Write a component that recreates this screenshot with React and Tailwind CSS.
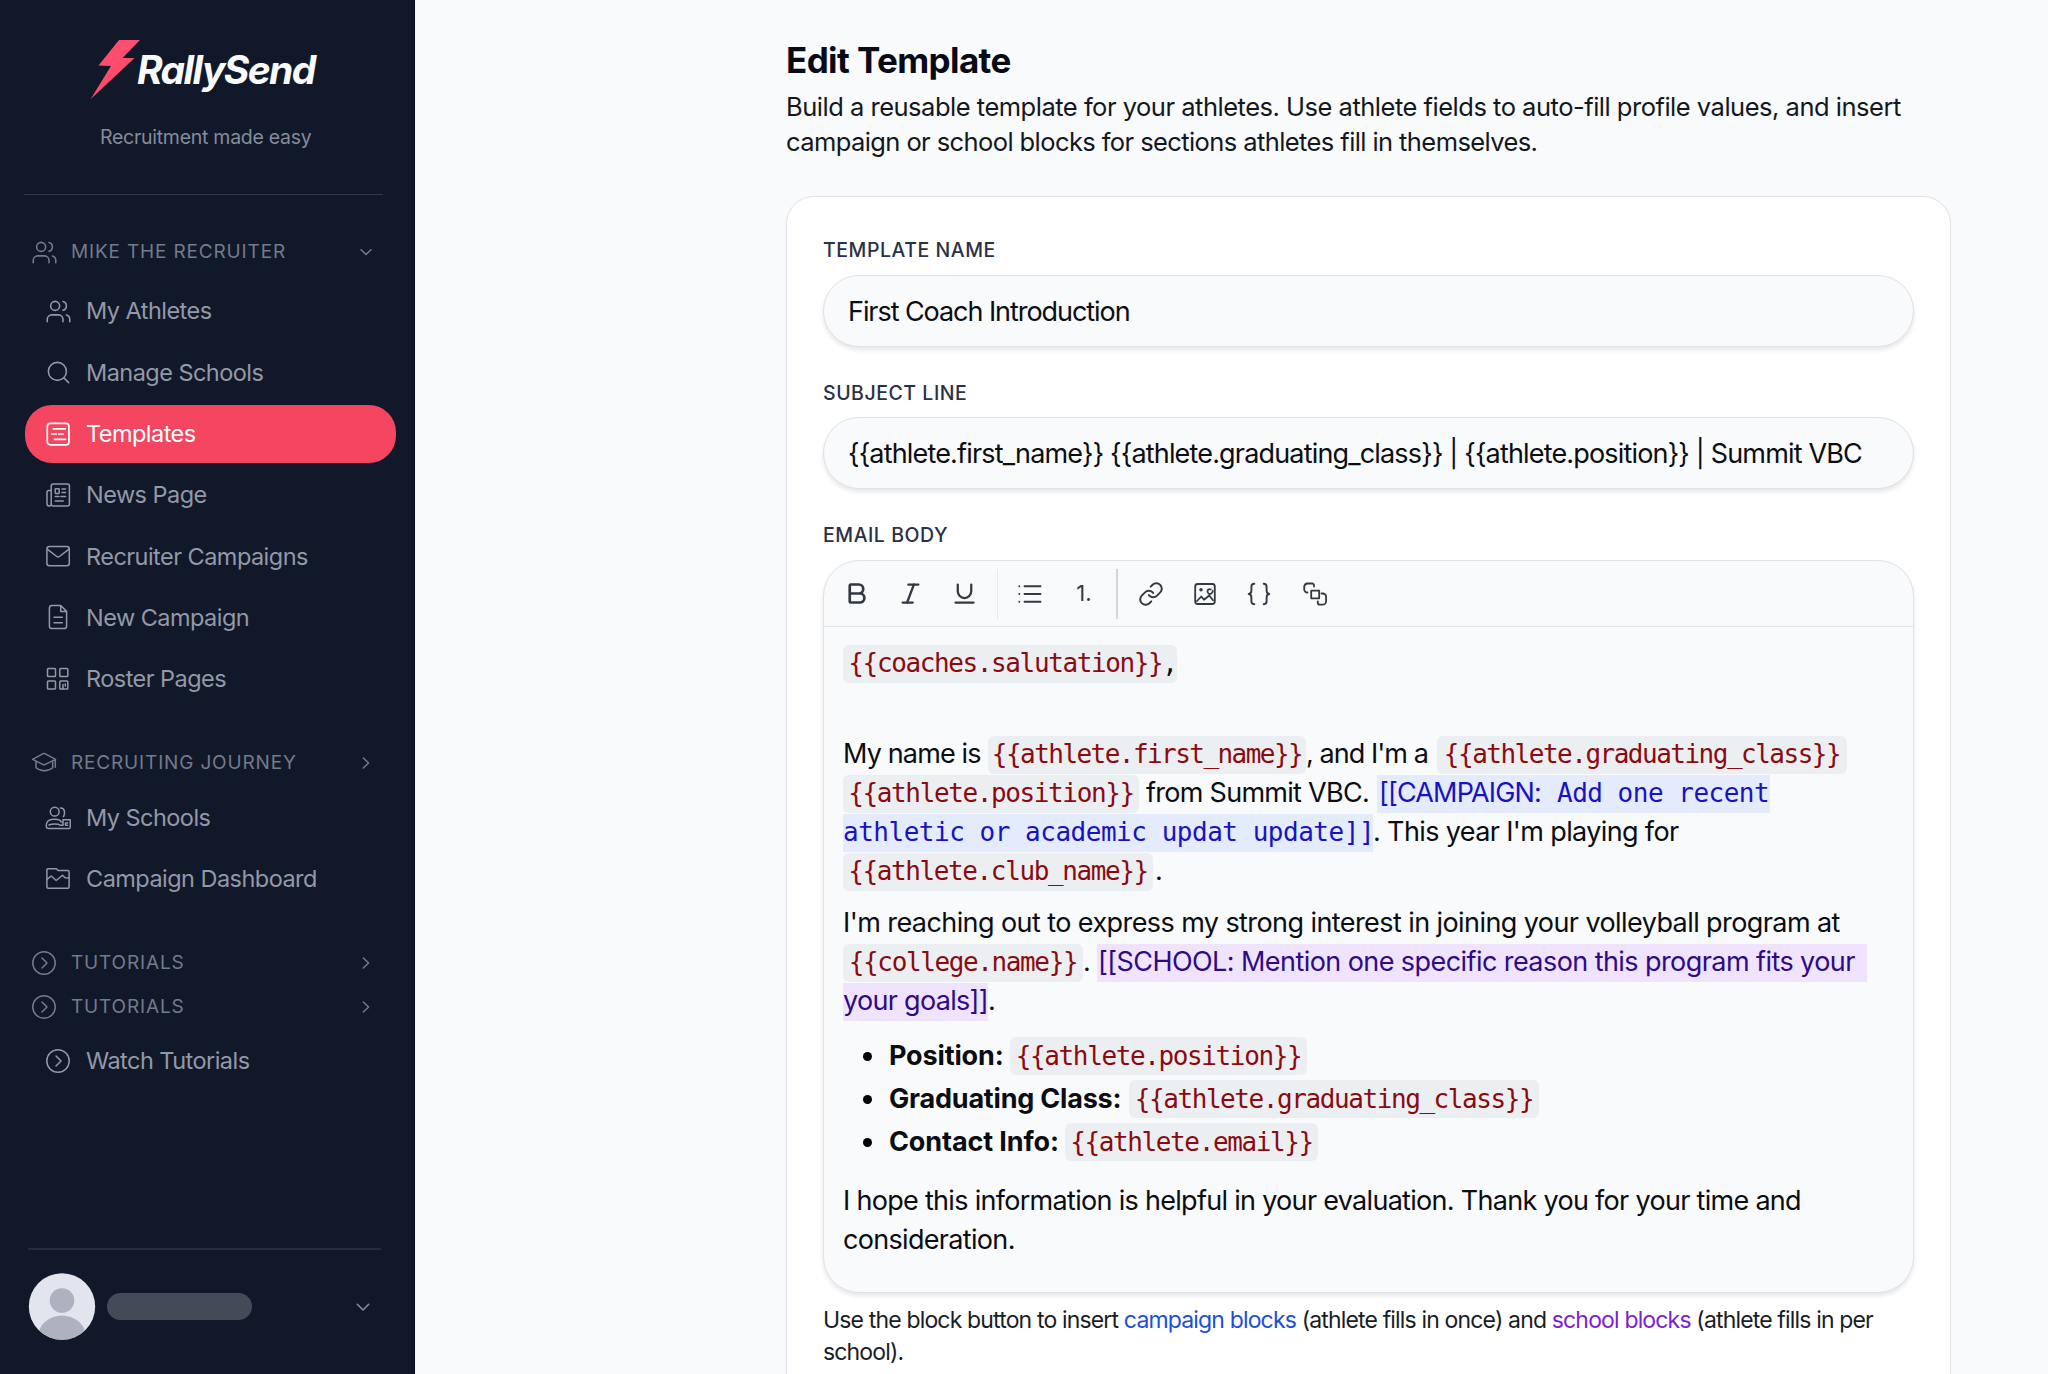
import React from "react";
import { Bold, Italic, Link, Search, Underline, Users } from "lucide-react";
import clsx from "clsx";

const Icon = ({ children, size = 26, sw = 1.5, className }) => (
  <svg
    width={size}
    height={size}
    viewBox="0 0 26 26"
    fill="none"
    stroke="currentColor"
    strokeWidth={sw}
    strokeLinecap="round"
    strokeLinejoin="round"
    className={clsx("shrink-0", className)}
  >
    {children}
  </svg>
);

const UsersIcon = () => <Users size={27} strokeWidth={1.4} className="-mr-px shrink-0" />;

const SearchIcon = () => <Search size={27} strokeWidth={1.4} className="-mr-px shrink-0" />;

const TemplateIcon = () => (
  <Icon sw={1.7}>
    <rect x="2.3" y="2.3" width="21.6" height="21.6" rx="3" />
    <path d="M8.3 7.8h12M6.8 13h4.4M13.6 13h4.7M9.5 18.3h11" />
  </Icon>
);

const NewsIcon = () => (
  <Icon>
    <rect x="6.2" y="2" width="18.2" height="22" rx="2" />
    <path d="M6.2 8.5H4A2 2 0 0 0 2 10.5v11.3a2.2 2.2 0 0 0 4.4 0" />
    <rect x="10.2" y="6.8" width="4" height="4.6" rx=".6" />
    <path d="M17 7h3.5M17 10.5h3.5M10.3 14.5H14M16 14.5h4.5M10.3 19h8" />
  </Icon>
);

const MailIcon = () => (
  <Icon>
    <rect x="1.9" y="3.4" width="22.4" height="19.4" rx="2.5" />
    <path d="m2.5 6.3 9.3 7.2a2.1 2.1 0 0 0 2.6 0l9.3-7.2" />
  </Icon>
);

const FileIcon = () => (
  <Icon>
    <path d="M15.7 1.5H7A2.6 2.6 0 0 0 4.4 4.1v17.8A2.6 2.6 0 0 0 7 24.5h12a2.6 2.6 0 0 0 2.6-2.6V7.4zv5.9h5.9" />
    <path d="M9 13.3h8.3M9 18.7h8.3" />
  </Icon>
);

const GridIcon = () => (
  <Icon>
    <rect x="2.5" y="2.5" width="8" height="8" rx=".8" />
    <rect x="14.8" y="2.5" width="8" height="8" rx=".8" />
    <rect x="2.5" y="15" width="8" height="8" rx=".8" />
    <rect x="14.8" y="15" width="8" height="8" rx=".8" />
    <path d="M18 23v-4.5M20.3 18v2" />
  </Icon>
);

const CapIcon = () => (
  <Icon>
    <path d="M1.6 9.3 12.2 3.7a1.8 1.8 0 0 1 1.7 0l10.6 5.6-10.6 5.3a1.8 1.8 0 0 1-1.7 0zM24.3 9.7v7.5" />
    <path d="M5 11.5v6.2c4.5 3.9 12.2 3.9 16.7 0v-6" />
  </Icon>
);

const SchoolsIcon = () => (
  <Icon>
    <circle cx="9.7" cy="6.7" r="4.4" />
    <path d="M15.4 3c4.5-.2 5 5 3.1 8.6M3.5 23.5c-3 0-2.5-4-1.5-6 2-4 12.5-4.3 14.3-.4M4 20c3-1.5 9-1.5 11 0M3.5 23.5h20.4c1 0 1.3-.5 1.3-1.3v-7.4H18v5.4h-3M22.5 18h-2v2.2h2" />
  </Icon>
);

const DashboardIcon = () => (
  <Icon>
    <path d="M1.9 3.9A1.2 1.2 0 0 1 3.1 2.7h8.2l1.8 1.7h9.8A1.2 1.2 0 0 1 24.1 5.6v15.5a1.2 1.2 0 0 1-1.2 1.2H3.1a1.2 1.2 0 0 1-1.2-1.2z" />
    <path d="m2.5 13 3.7-3 5 4.5 6.3-5.3 2.6 2.5 3.6.3" />
  </Icon>
);

const CircleArrowIcon = () => (
  <Icon>
    <circle cx="13" cy="13" r="11.2" />
    <path d="m11 8 5 5-5 5" />
  </Icon>
);

const ChevronDownIcon = ({ wide }) => (
  <Icon className={wide && "text-[#8a90a0]"}>
    <path d={wide ? "m7.3 10.3 5.7 5.7 5.7-5.7" : "m8 10.8 5 4.7 5-4.7"} />
  </Icon>
);

const ChevronRightIcon = () => (
  <Icon>
    <path d="m10.3 8 5.3 5-5.3 5" />
  </Icon>
);

const BulletsIcon = () => (
  <Icon sw={1.9}>
    <path d="M7.5 5.2h16M7.5 13h16M7.5 20.8h16M2.3 5.2h.01M2.3 13h.01M2.3 20.8h.01" />
  </Icon>
);

const ImageIcon = () => (
  <Icon sw={1.8}>
    <rect x="3.2" y="3" width="19.6" height="20" rx="2.5" />
    <circle cx="9" cy="8.8" r=".9" />
    <path d="m5 20 4.3-4.5 2.7 3.3 5.3-4.3 3.7 4.8M18.7 8.5c-3-1.5-4.2 2.5-2.2 4 2 1.2 4-.3 4.3-2.5" />
  </Icon>
);

const BracesIcon = () => (
  <Icon sw={1.9}>
    <path d="M8.3 2.8c-2.3 0-2.9 1-2.9 2.9v3.5c0 2.2-.6 3.8-2.7 3.8 2.1 0 2.7 1.6 2.7 3.8v3.5c0 1.9.6 2.9 2.9 2.9M17.7 2.8c2.3 0 2.9 1 2.9 2.9v3.5c0 2.2.6 3.8 2.7 3.8-2.1 0-2.7 1.6-2.7 3.8v3.5c0 1.9-.6 2.9-2.9 2.9" />
  </Icon>
);

const BlockIcon = () => (
  <Icon sw={1.8}>
    <path d="M12 5.5V4.3a1.8 1.8 0 0 0-1.8-1.8H5.5a3.5 3.5 0 0 0-3.3 3.3v2.4a3.3 3.3 0 0 0 3.3 3.3" />
    <rect x="9.2" y="9.7" width="8" height="7.6" />
    <path d="M19.5 12.5h1.3a3.3 3.3 0 0 1 3.3 3.3v4.4a3.5 3.5 0 0 1-3.5 3.5h-2.8a2 2 0 0 1-2-2v-1.3" />
  </Icon>
);

const recruiterItems = [
  { label: "My Athletes", icon: UsersIcon },
  { label: "Manage Schools", icon: SearchIcon },
  { label: "Templates", icon: TemplateIcon, active: true },
  { label: "News Page", icon: NewsIcon },
  { label: "Recruiter Campaigns", icon: MailIcon },
  { label: "New Campaign", icon: FileIcon },
  { label: "Roster Pages", icon: GridIcon },
];

const journeyItems = [
  { label: "My Schools", icon: SchoolsIcon },
  { label: "Campaign Dashboard", icon: DashboardIcon },
];

const SectionHeader = ({ icon: I, label, open, className }) => (
  <div
    className={clsx(
      "flex h-10 items-center pl-[31px] pr-[35px] text-[#737b8c]",
      className
    )}
  >
    <I />
    <span className="ml-3.5 flex-1 whitespace-nowrap text-[19px] tracking-[0.84px]">
      {label}
    </span>
    {open ? <ChevronDownIcon /> : <ChevronRightIcon />}
  </div>
);

const NavItem = ({ icon: I, label, active }) => (
  <div
    className={clsx(
      "ml-[25px] flex h-[58px] w-[371px] items-center gap-[15px] rounded-[27px] pl-5",
      active ? "bg-[#f44561] text-white" : "text-[#9299a8]"
    )}
  >
    <I />
    <span className="whitespace-nowrap text-[23.5px] tracking-[-0.54px]">{label}</span>
  </div>
);

const Sidebar = () => (
  <aside className="flex h-full w-[415px] shrink-0 flex-col border-r border-[#0a0f1d] bg-[#111829]">
    <div className="mt-10 flex h-[60px] items-center pl-[90px]">
      <svg width="50" height="60" viewBox="0 0 50 60" className="shrink-0">
        <defs>
          <linearGradient id="bolt" x1="0" y1="0" x2="0" y2="1">
            <stop offset="0" stopColor="#ff4f70" />
            <stop offset="1" stopColor="#fb4a68" />
          </linearGradient>
        </defs>
        <path d="M29 0h21L32.5 18h12L.5 59.3 21 26 8.5 25.5z" fill="url(#bolt)" />
      </svg>
      <span className="-ml-[3px] pb-0.5 text-[39px] font-bold italic leading-none tracking-[-1.6px] text-[#f8fafc]">
        RallySend
      </span>
    </div>
    <p className="mt-[25px] pl-[100px] text-[19.5px] leading-6 tracking-[-0.27px] text-[#858c9c]">
      Recruitment made easy
    </p>
    <div className="ml-6 mt-[45px] w-[359px] border-t border-[#323848]" />

    <SectionHeader icon={UsersIcon} label="MIKE THE RECRUITER" open className="mt-[37px]" />
    <nav className="mt-2.5 flex flex-col gap-[3.3px]">
      {recruiterItems.map((item) => (
        <NavItem key={item.label} {...item} />
      ))}
    </nav>

    <SectionHeader icon={CapIcon} label="RECRUITING JOURNEY" className="mt-[35px]" />
    <nav className="mt-1.5 flex flex-col gap-[3.3px]">
      {journeyItems.map((item) => (
        <NavItem key={item.label} {...item} />
      ))}
    </nav>

    <SectionHeader icon={CircleArrowIcon} label="TUTORIALS" className="mt-[35px]" />
    <SectionHeader icon={CircleArrowIcon} label="TUTORIALS" className="mt-1" />
    <nav className="mt-[5px]">
      <NavItem icon={CircleArrowIcon} label="Watch Tutorials" />
    </nav>

    {/* Account */}
    <div className="mb-[34px] ml-7 mt-auto flex w-[353px] items-center border-t-2 border-[#272d3d] pt-[23px]">
      <svg width="68" height="67" viewBox="0 0 68 67" className="shrink-0">
        <defs>
          <clipPath id="avatar">
            <circle cx="34" cy="33.5" r="33.2" />
          </clipPath>
        </defs>
        <g clipPath="url(#avatar)">
          <rect width="68" height="67" fill="#e2e5ee" />
          <circle cx="34" cy="27.5" r="12.3" fill="#adb2be" />
          <ellipse cx="34" cy="64" rx="24" ry="21.5" fill="#adb2be" />
        </g>
      </svg>
      <div className="ml-[11px] h-[27px] w-[145px] rounded-full bg-[#454a59]" />
      <div className="ml-auto mr-[5px]">
        <ChevronDownIcon wide />
      </div>
    </div>
  </aside>
);

const FieldLabel = ({ children, className }) => (
  <div
    className={clsx(
      "text-[19.5px] font-medium leading-6 tracking-[0.54px] text-[#2a3146]",
      className
    )}
  >
    {children}
  </div>
);

const TextField = ({ children, className }) => (
  <div
    className={clsx(
      "flex h-[72px] items-center whitespace-nowrap rounded-[36px] border border-[#dfe2e6] bg-[#f8fafc] pl-6 pt-0.5 text-[#0b0d12] shadow-[0_3px_4px_rgba(15,23,42,0.10)]",
      className
    )}
  >
    {children}
  </div>
);

const ToolButton = ({ children }) => (
  <div className="flex w-[54px] items-center justify-center">{children}</div>
);

const Line = ({ children, className }) => (
  <div className={clsx("flex h-[39px] items-center whitespace-nowrap pt-0.5", className)}>
    {children}
  </div>
);

// merge field, e.g. {{athlete.first_name}}
const Chip = ({ children, className }) => (
  <code
    className={clsx(
      "flex h-[38px] shrink-0 items-center justify-center rounded-md bg-[#eceff2] font-['DejaVu_Sans_Mono',monospace] text-[26px] text-[#8b0a10]",
      className
    )}
  >
    {children}
  </code>
);

const Toolbar = () => (
  <div className="flex h-[66px] items-center border-b border-[#e1e4e8] pl-[5px] text-[#343841]">
    <ToolButton>
      <Bold size={27} strokeWidth={2.4} />
    </ToolButton>
    <ToolButton>
      <Italic size={27} strokeWidth={2} />
    </ToolButton>
    <ToolButton>
      <Underline size={27} strokeWidth={2} />
    </ToolButton>
    <div className="ml-1.5 mr-[5px] h-[50px] w-px bg-[#e6e9ec]" />
    <ToolButton>
      <BulletsIcon />
    </ToolButton>
    <ToolButton>
      <span className="text-[22px]">1.</span>
    </ToolButton>
    <div className="ml-[5px] mr-1.5 h-[50px] w-0.5 bg-[#d3d6da]" />
    <ToolButton>
      <Link size={26} strokeWidth={1.8} />
    </ToolButton>
    <ToolButton>
      <ImageIcon />
    </ToolButton>
    <ToolButton>
      <BracesIcon />
    </ToolButton>
    <div className="ml-0.5 flex">
      <ToolButton>
        <BlockIcon />
      </ToolButton>
    </div>
  </div>
);

const Bullet = ({ label, labelClass, children }) => (
  <li className="flex h-[43px] items-center whitespace-nowrap pt-px">
    <span className="ml-5 h-[9px] w-[9px] shrink-0 rounded-full bg-black" />
    <span className={clsx("ml-[17px] shrink-0 pt-px text-[27px] font-bold", labelClass)}>
      {label}
    </span>
    {children}
  </li>
);

const EmailBody = () => (
  <div className="pl-[19px] pt-4 text-[27px] tracking-[-0.7px] text-[#0b0d12]">
    <Line>
      <Chip className="w-[334px] pl-[5px] tracking-[-1.38px]">
        {"{{coaches.salutation}}"}
        <span className="text-[#0b0d12]">,</span>
      </Chip>
    </Line>

    <div className="mt-[52px]">
      <Line>
        <span className="w-[145px] shrink-0 tracking-[-0.85px]">My name is</span>
        <Chip className="w-[318px] tracking-[-1.55px]">{"{{athlete.first_name}}"}</Chip>
        <span className="w-[131px] shrink-0 tracking-[-0.95px]">, and I'm a</span>
        <Chip className="w-[410px] tracking-[-1.5px]">{"{{athlete.graduating_class}}"}</Chip>
      </Line>
      <Line>
        <Chip className="w-[296px] tracking-[-1.38px]">{"{{athlete.position}}"}</Chip>
        <span className="w-[238px] shrink-0 pl-[7px] tracking-[-0.72px]">from Summit VBC.</span>
        <span className="flex h-[38px] w-[393px] shrink-0 items-center bg-[#e3ebfc] pl-0.5 text-[#1a12c0]">
          <span className="w-[178px] tracking-[-0.85px]">[[CAMPAIGN:</span>
          <code className="font-['DejaVu_Sans_Mono',monospace] text-[26px] tracking-[-0.5px]">
            Add one recent
          </code>
        </span>
      </Line>
      <Line>
        <code className="flex h-[38px] w-[530px] shrink-0 items-center bg-[#e3ebfc] font-['DejaVu_Sans_Mono',monospace] text-[26px] tracking-[-0.48px] text-[#1a12c0]">
          athletic or academic updat update]]
        </code>
        <span className="tracking-[-0.63px]">. This year I'm playing for</span>
      </Line>
      <Line>
        <Chip className="w-[310px] tracking-[-1.38px]">{"{{athlete.club_name}}"}</Chip>
        <span className="pl-0.5">.</span>
      </Line>
    </div>

    <div className="mt-[13px]">
      <Line className="tracking-[-0.58px]">
        I'm reaching out to express my strong interest in joining your volleyball program at
      </Line>
      <Line>
        <Chip className="w-[240px] tracking-[-1.38px]">{"{{college.name}}"}</Chip>
        <span className="w-[14px] shrink-0">.</span>
        <span className="flex h-[38px] w-[770px] shrink-0 items-center bg-[#efe3fd] pl-px tracking-[-0.57px] text-[#2f0a85]">
          [[SCHOOL: Mention one specific reason this program fits your
        </span>
      </Line>
      <Line>
        <span className="flex h-[38px] w-[145px] shrink-0 items-center bg-[#efe3fd] text-[#2f0a85]">
          your goals]]
        </span>
        <span>.</span>
      </Line>
    </div>

    <ul className="mt-[14px]">
      <Bullet label="Position:" labelClass="w-[121px] tracking-[-0.15px]">
        <Chip className="w-[297px] tracking-[-1.38px]">{"{{athlete.position}}"}</Chip>
      </Bullet>
      <Bullet label="Graduating Class:" labelClass="w-[240px] tracking-[-0.2px]">
        <Chip className="w-[410px] tracking-[-1.42px]">{"{{athlete.graduating_class}}"}</Chip>
      </Bullet>
      <Bullet label="Contact Info:" labelClass="w-[176px] tracking-[-0.12px]">
        <Chip className="w-[253px] tracking-[-1.38px]">{"{{athlete.email}}"}</Chip>
      </Bullet>
    </ul>

    <div className="mt-[18px]">
      <Line className="tracking-[-0.7px]">
        I hope this information is helpful in your evaluation. Thank you for your time and
      </Line>
      <Line className="tracking-[-0.68px]">consideration.</Line>
    </div>
  </div>
);

export default function App() {
  return (
    <div className="flex h-[1374px] w-[2048px] overflow-hidden bg-[#f8fafc] font-[Inter,sans-serif]">
      <Sidebar />

      <main className="ml-[371px] w-[1165px] shrink-0 pt-[38px]">
        <h1 className="text-[35px] font-bold leading-[44px] tracking-[-0.6px] text-[#080b16]">
          Edit Template
        </h1>
        <p className="mt-[8px] whitespace-nowrap text-[25.5px] leading-[34.5px] tracking-[-0.49px] text-[#14171d]">
          Build a reusable template for your athletes. Use athlete fields to auto-fill profile
          values, and insert
          <br />
          <span className="tracking-[-0.59px]">
            campaign or school blocks for sections athletes fill in themselves.
          </span>
        </p>

        <section className="mt-[37px] h-[1240px] rounded-[28px] border border-[#e0e3e7] bg-white px-9 pt-[41px] shadow-[0_1px_3px_rgba(15,23,42,0.04)]">
          <FieldLabel>TEMPLATE NAME</FieldLabel>
          <TextField className="mt-[13px] text-[27px] tracking-[-1.06px]">
            First Coach Introduction
          </TextField>

          <FieldLabel className="mt-[34px]">SUBJECT LINE</FieldLabel>
          <TextField className="mt-[12px] text-[27px] tracking-[-0.83px]">
            {"{{athlete.first_name}} {{athlete.graduating_class}} | {{athlete.position}} | Summit VBC"}
          </TextField>

          <FieldLabel className="mt-[34px]">EMAIL BODY</FieldLabel>
          <div className="mt-[13px] h-[733px] rounded-[36px] border border-[#dfe2e6] bg-[#f8fafc] shadow-[0_3px_4px_rgba(15,23,42,0.10)]">
            <Toolbar />
            <EmailBody />
          </div>

          <p className="mt-[11px] whitespace-nowrap text-[23px] leading-8 tracking-[-0.84px] text-[#1a1d24]">
            Use the block button to insert <span className="text-[#1d4ed8]">campaign blocks</span>{" "}
            (athlete fills in once) and <span className="text-[#7e22ce]">school blocks</span>{" "}
            (athlete fills in per
            <br />
            school).
          </p>
        </section>
      </main>
    </div>
  );
}
